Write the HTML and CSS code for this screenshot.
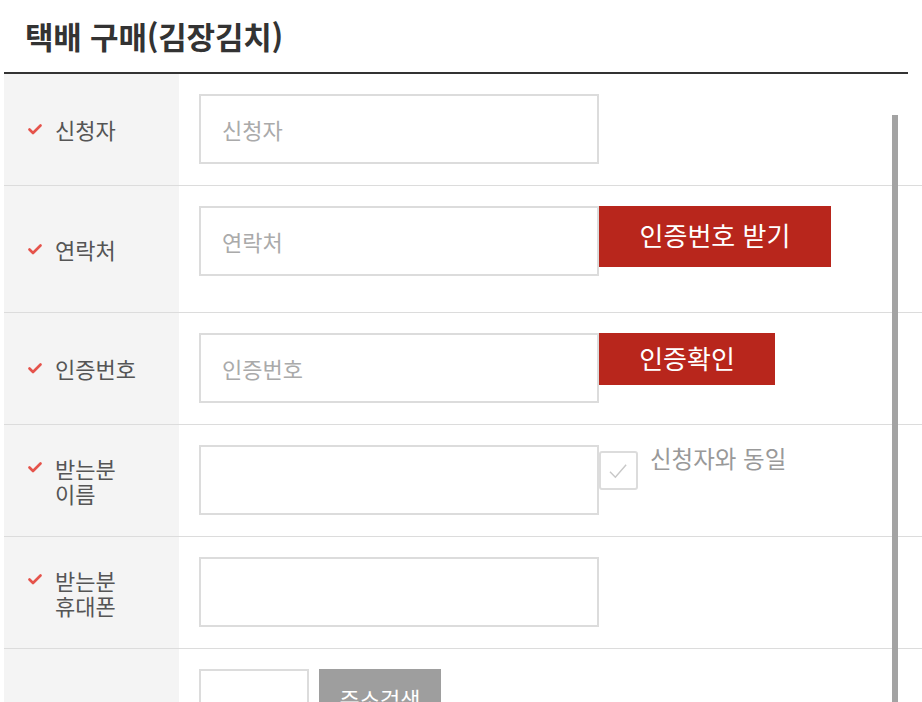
FILE: index.html
```html
<!DOCTYPE html>
<html lang="ko">
<head>
<meta charset="utf-8">
<title>택배 구매(김장김치)</title>
<link rel="stylesheet" href="styles.css">
</head>
<body>
<div class="page">
  <h1 class="title">택배 구매(김장김치)</h1>
  <div class="form">
    <div class="row">
      <div class="label"><svg class="req" viewBox="0 0 14 11" width="14" height="11"><polyline points="1.5,5.5 5,9 12.5,1.5"/></svg><span>신청자</span></div>
      <div class="field"><input class="inp" type="text" placeholder="신청자"></div>
    </div>
    <div class="row row-tall">
      <div class="label"><svg class="req" viewBox="0 0 14 11" width="14" height="11"><polyline points="1.5,5.5 5,9 12.5,1.5"/></svg><span>연락처</span></div>
      <div class="field"><input class="inp" type="text" placeholder="연락처"><button class="btn btn-red btn-lg">인증번호 받기</button></div>
    </div>
    <div class="row">
      <div class="label"><svg class="req" viewBox="0 0 14 11" width="14" height="11"><polyline points="1.5,5.5 5,9 12.5,1.5"/></svg><span>인증번호</span></div>
      <div class="field"><input class="inp" type="text" placeholder="인증번호"><button class="btn btn-red btn-md">인증확인</button></div>
    </div>
    <div class="row">
      <div class="label"><svg class="req req-top" viewBox="0 0 14 11" width="14" height="11"><polyline points="1.5,5.5 5,9 12.5,1.5"/></svg><span>받는분<br>이름</span></div>
      <div class="field"><input class="inp" type="text">
        <label class="same"><span class="box"><svg viewBox="0 0 39 39" width="35" height="35"><polyline points="10,21 16,27 28,13"/></svg></span><span class="same-text">신청자와 동일</span></label>
      </div>
    </div>
    <div class="row">
      <div class="label"><svg class="req req-top" viewBox="0 0 14 11" width="14" height="11"><polyline points="1.5,5.5 5,9 12.5,1.5"/></svg><span>받는분<br>휴대폰</span></div>
      <div class="field"><input class="inp" type="text"></div>
    </div>
    <div class="row">
      <div class="label"></div>
      <div class="field"><input class="inp inp-zip" type="text"><button class="btn btn-gray">주소검색</button></div>
    </div>
  </div>
  <div class="scrollbar"></div>
</div>
</body>
</html>
```

FILE: styles.css
```css
html, body {
  margin: 0;
  padding: 0;
  background: #fff;
  overflow: hidden;
}
body {
  font-family: "Noto Sans CJK KR", "Noto Sans", sans-serif;
  color: #555;
}
.page {
  position: relative;
  width: 922px;
  height: 702px;
  overflow: hidden;
}
.title {
  margin: 0 0 0 4px;
  width: 904px;
  height: 74px;
  padding: 0 0 2px 21px;
  box-sizing: border-box;
  display: flex;
  align-items: center;
  font-size: 31px;
  font-weight: 700;
  color: #333;
  letter-spacing: -0.2px;
  border-bottom: 2px solid #333;
  line-height: 1;
}
.form {
  margin-left: 4px;
  width: 918px;
}
.row {
  display: grid;
  grid-template-columns: 175px 1fr;
  border-bottom: 1px solid #dcdcdc;
}
.label {
  background: #f4f4f4;
  display: flex;
  align-items: center;
  padding-left: 24px;
  font-size: 22px;
  line-height: 25px;
  color: #555;
}
.req {
  flex: none;
  fill: none;
  stroke: #e5534b;
  stroke-width: 2.6;
  stroke-linecap: round;
  stroke-linejoin: round;
  margin-right: 13px;
}
.req-top {
  margin-top: -26px;
}
.label span {
  display: block;
}
.field {
  display: flex;
  align-items: flex-start;
  padding: 20px 0 21px 20px;
}
.row-tall .field {
  padding-bottom: 36px;
}
.inp {
  width: 400px;
  height: 70px;
  box-sizing: border-box;
  border: 2px solid #dcdcdc;
  background: #fff;
  margin: 0;
  padding: 0 0 0 21px;
  font-family: "Noto Sans CJK KR", sans-serif;
  font-size: 22px;
  color: #555;
  outline: none;
}
.inp::placeholder {
  color: #aaa;
}
.inp-zip {
  width: 110px;
}
.btn {
  margin: 0;
  border: 0;
  padding: 0 0 3px;
  font-family: "Noto Sans CJK KR", sans-serif;
  font-size: 26px;
  line-height: 1;
  color: #fff;
  white-space: nowrap;
}
.btn-red {
  background: #b8261c;
}
.btn-lg {
  width: 232px;
  height: 61px;
}
.btn-md {
  width: 176px;
  height: 52px;
}
.btn-gray {
  background: #9e9e9e;
  width: 122px;
  height: 60px;
  margin-left: 10px;
  font-size: 22px;
}
.same {
  display: flex;
  align-items: flex-start;
  margin-top: 6px;
}
.box {
  width: 39px;
  height: 39px;
  box-sizing: border-box;
  border: 2px solid #dcdcdc;
  border-radius: 3px;
  display: flex;
  align-items: center;
  justify-content: center;
}
.box svg {
  fill: none;
  stroke: #c8c8c8;
  stroke-width: 1.6;
}
.same-text {
  margin-left: 12px;
  margin-top: -6px;
  font-size: 23.5px;
  line-height: 26px;
  color: #999;
}
.scrollbar {
  position: absolute;
  left: 892px;
  top: 115px;
  width: 6px;
  bottom: 0;
  background: #a3a3a3;
}
```
